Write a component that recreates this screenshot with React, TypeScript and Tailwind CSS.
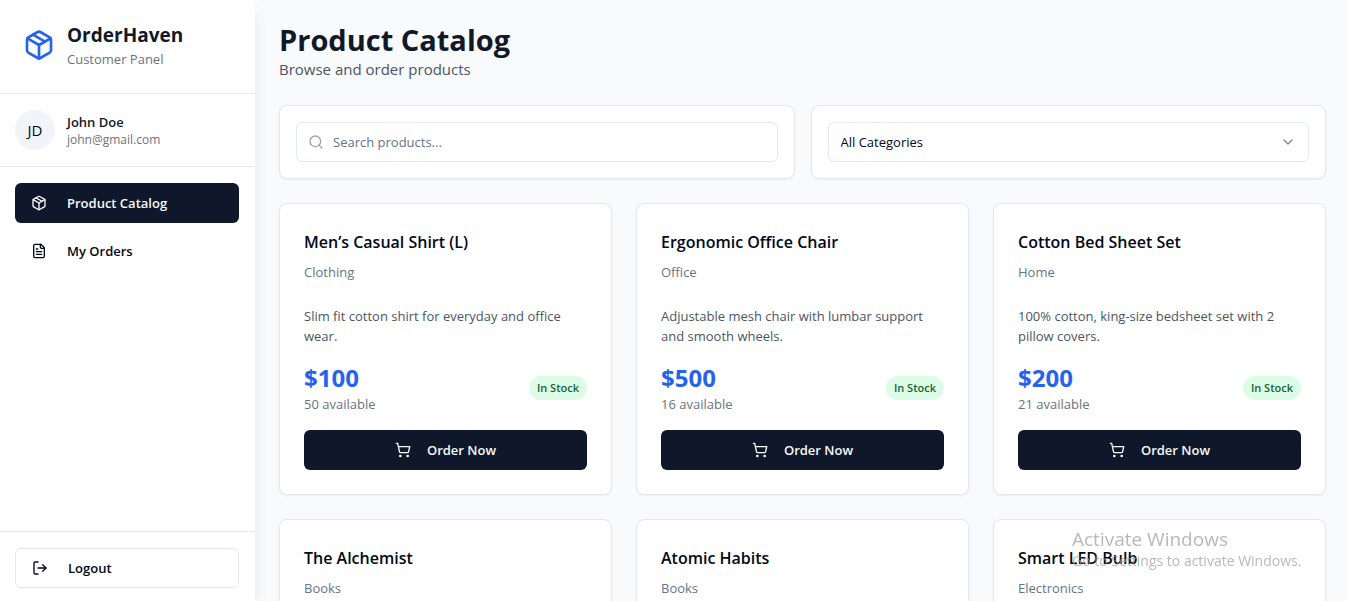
import React from "react";
import { ChevronDown, LogOut, Search, ShoppingCart } from "lucide-react";

type Product = {
  name: string;
  category: string;
  description: string;
  price: number;
  available: number;
};

const products: Product[] = [
  { name: "Men’s Casual Shirt (L)", category: "Clothing", description: "Slim fit cotton shirt for everyday and office wear.", price: 100, available: 50 },
  { name: "Ergonomic Office Chair", category: "Office", description: "Adjustable mesh chair with lumbar support and smooth wheels.", price: 500, available: 16 },
  { name: "Cotton Bed Sheet Set", category: "Home", description: "100% cotton, king-size bedsheet set with 2 pillow covers.", price: 200, available: 21 },
  { name: "The Alchemist", category: "Books", description: "A novel about following your dreams and finding your destiny.", price: 15, available: 40 },
  { name: "Atomic Habits", category: "Books", description: "An easy and proven way to build good habits and break bad ones.", price: 20, available: 35 },
  { name: "Smart LED Bulb", category: "Electronics", description: "Color changing bulb with voice control and app support.", price: 25, available: 60 },
];

function PackageIcon({ className }: { className: string }) {
  return (
    <svg viewBox="0 0 24 24" fill="none" stroke="currentColor" strokeWidth="2" strokeLinecap="round" strokeLinejoin="round" className={className} aria-hidden="true">
      <path d="m7.5 4.27 9 5.15" />
      <path d="M21 8a2 2 0 0 0-1-1.73l-7-4a2 2 0 0 0-2 0l-7 4A2 2 0 0 0 3 8v8a2 2 0 0 0 1 1.73l7 4a2 2 0 0 0 2 0l7-4A2 2 0 0 0 21 16Z" />
      <path d="m3.3 7 8.7 5 8.7-5" />
      <path d="M12 22V12" />
    </svg>
  );
}

function FileIcon({ className }: { className: string }) {
  return (
    <svg viewBox="0 0 24 24" fill="none" stroke="currentColor" strokeWidth="2" strokeLinecap="round" strokeLinejoin="round" className={className} aria-hidden="true">
      <path d="M15 2H6a2 2 0 0 0-2 2v16a2 2 0 0 0 2 2h12a2 2 0 0 0 2-2V7Z" />
      <path d="M14 2v4a2 2 0 0 0 2 2h4" />
      <path d="M10 9H8" />
      <path d="M16 13H8" />
      <path d="M16 17H8" />
    </svg>
  );
}

function Sidebar() {
  return (
    <aside className="flex w-[255px] shrink-0 flex-col bg-white shadow-lg">
      <div className="flex items-center gap-3 border-b border-[#e2e8f0] pt-[21px] pb-6 pl-[23px]">
        <PackageIcon className="size-8 text-[#2563eb]" />
        <div>
          <p className="text-[19px] leading-7 font-bold text-[#111827]">OrderHaven</p>
          <p className="text-[13px] leading-5 text-[#6b7280]">Customer Panel</p>
        </div>
      </div>
      <div className="flex items-center gap-3 border-b border-[#e2e8f0] py-4 pl-[15px]">
        <div className="flex size-10 items-center justify-center rounded-full bg-[#f1f5f9] text-[15px] text-[#020817]">JD</div>
        <div>
          <p className="text-[13px] leading-5 font-semibold text-[#111827]">John Doe</p>
          <p className="text-[12px] leading-4 text-[#6b7280]">john@gmail.com</p>
        </div>
      </div>
      <nav className="flex flex-1 flex-col gap-2 py-4 pr-4 pl-[15px]">
        <a href="#catalog" aria-current="page" className="flex h-10 items-center gap-5 rounded-md bg-[#0f172a] px-4 text-[13px] leading-5 font-semibold text-[#f8fafc]">
          <PackageIcon className="size-4" />
          Product Catalog
        </a>
        <a href="#orders" className="flex h-10 items-center gap-5 rounded-md px-4 text-[13px] leading-5 font-semibold text-[#020817]">
          <FileIcon className="size-4" />
          My Orders
        </a>
      </nav>
      <div className="border-t border-[#e2e8f0] pt-4 pr-4 pb-[13px] pl-[15px]">
        <button type="button" className="flex h-10 w-full items-center gap-5 rounded-md border border-[#e2e8f0] bg-white px-4 text-[13px] leading-5 font-semibold text-[#020817]">
          <LogOut className="size-4" />
          Logout
        </button>
      </div>
    </aside>
  );
}

function ProductCard({ product }: { product: Product }) {
  return (
    <article className="rounded-lg border border-[#e2e8f0] bg-white p-6 text-[#020817] shadow-xs">
      <h2 className="text-[16px] leading-7 font-semibold">{product.name}</h2>
      <p className="mt-1.5 text-[13px] leading-5 text-[#64748b]">{product.category}</p>
      <p className="mt-6 text-[13px] leading-5 text-[#4b5563]">{product.description}</p>
      <div className="mt-4 flex items-center justify-between">
        <div>
          <p className="text-[24px] leading-8 font-bold text-[#2563eb]">${product.price}</p>
          <p className="text-[13px] leading-5 text-[#6b7280]">{product.available} available</p>
        </div>
        <span className="rounded-full bg-[#dcfce7] px-2 py-1 text-[11px] leading-4 font-semibold text-[#166534]">In Stock</span>
      </div>
      <button type="button" className="mt-4 flex h-10 w-full items-center justify-center gap-4 rounded-md bg-[#0f172a] text-[13px] leading-5 font-semibold text-[#f8fafc]">
        <ShoppingCart className="size-4" />
        Order Now
      </button>
    </article>
  );
}

export default function App() {
  return (
    <div className="flex h-screen overflow-hidden bg-[#f9fafb] font-['Open_Sans','Noto_Sans',sans-serif] text-[#020817]">
      <Sidebar />
      <main className="min-w-0 flex-1 overflow-y-auto pt-[22px] pr-[22px] pb-6 pl-6 [scrollbar-width:none]">
        <h1 className="text-[29px] leading-9 font-bold text-[#111827]">Product Catalog</h1>
        <p className="text-[15px] leading-[22px] text-[#4b5563]">Browse and order products</p>

        <div className="mt-[25px] grid grid-cols-2 gap-4">
          <div className="rounded-lg border border-[#e2e8f0] bg-white p-4 shadow-xs">
            <label className="flex h-10 items-center gap-[9px] rounded-md border border-[#e2e8f0] px-[11px]">
              <Search className="size-4 shrink-0 text-[#9ca3af]" />
              <input type="text" aria-label="Search products" placeholder="Search products..." className="h-full min-w-0 flex-1 bg-transparent text-[13px] leading-5 outline-none placeholder:text-[#64748b]" />
            </label>
          </div>
          <div className="rounded-lg border border-[#e2e8f0] bg-white p-4 shadow-xs">
            <div className="relative">
              <select aria-label="Category" defaultValue="all" className="h-10 w-full appearance-none rounded-md border border-[#e2e8f0] bg-white px-3 text-[13px] leading-5">
                <option value="all">All Categories</option>
                <option value="clothing">Clothing</option>
                <option value="office">Office</option>
                <option value="home">Home</option>
                <option value="books">Books</option>
                <option value="electronics">Electronics</option>
              </select>
              <ChevronDown className="pointer-events-none absolute top-3 right-[13px] size-4 text-[#020817] opacity-50" />
            </div>
          </div>
        </div>

        <div className="mt-6 grid grid-cols-3 gap-6">
          {products.map((product) => (
            <ProductCard key={product.name} product={product} />
          ))}
        </div>
      </main>

      <div className="pointer-events-none fixed right-9 bottom-[30px] w-60 text-[#9a9a9a]/70">
        <p className="text-[19px] leading-6">Activate Windows</p>
        <p className="text-[14px] leading-5">Go to Settings to activate Windows.</p>
      </div>
    </div>
  );
}
